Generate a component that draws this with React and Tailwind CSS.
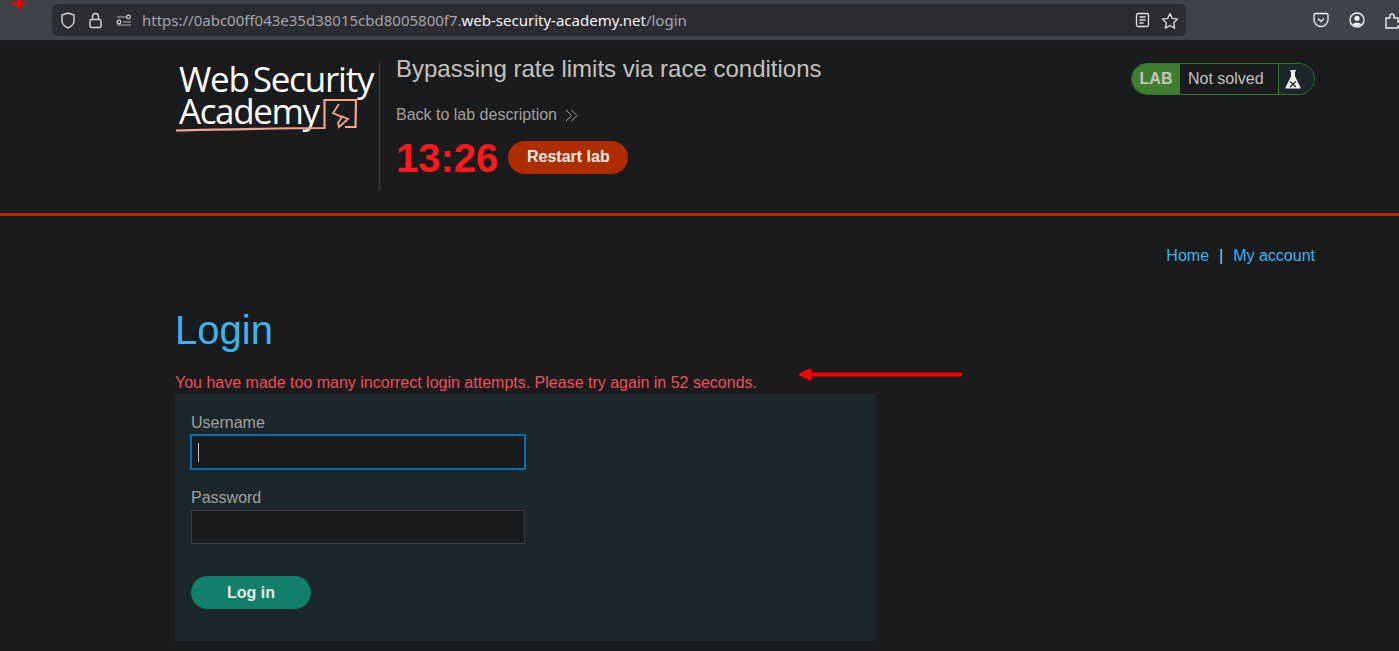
import React from "react";

const F = "font-['Liberation_Sans',Arial,sans-serif]";

function Toolbar() {
  return (
    <div className="relative h-[41px] flex items-center bg-[#3f4249] border-b border-[#1c1d20] font-['Inter',sans-serif]">
      <div className="absolute left-[12px] top-0 w-[14px] h-[9px]">
        <svg width="14" height="9" viewBox="0 0 14 9"><path d="M5 0h4v2h5v2.500H9V9H5V4.500H0V2h5z" fill="#f50000" /></svg>
      </div>
      <div className="ml-[52px] w-[1134px] shrink-0 h-8 rounded-[5px] bg-[#2b2c31] flex items-center pl-[8px] pr-[7px]">
        <svg width="16" height="17" viewBox="0 0 16 17" fill="none" stroke="#d6d6d9" strokeWidth="1.4"><path d="M8 1 2 3v6c0 3 3 5.500 6 7 3-1.500 6-4 6-7V3z" /></svg>
        <svg className="ml-[12px]" width="15" height="17" viewBox="0 0 15 17" fill="none" stroke="#d6d6d9" strokeWidth="1.4"><rect x="2" y="7.500" width="11" height="8" rx="1.500" /><path d="M4.500 7.500V4.500a3 3 0 0 1 6 0v3" /></svg>
        <svg className="ml-[13px]" width="16" height="12" viewBox="0 0 16 12" fill="none" stroke="#d6d6d9" strokeWidth="1.200"><circle cx="3" cy="8" r="1.800" /><circle cx="12.500" cy="3" r="1.800" /><path d="M1 3h9M7 8h8M1 11h14" strokeWidth="0.800" /></svg>
        <div className="ml-[10px] text-[15px] text-[#a4a5a9] font-['Noto_Sans',sans-serif] whitespace-nowrap">
          https://0abc00ff043e35d38015cbd8005800f7.<span className="text-[#f4f4f5]">web-security-academy.net</span>/login
        </div>
        <div className="ml-auto flex items-center gap-[11px]">
          <svg width="15" height="16" viewBox="0 0 15 16" fill="none" stroke="#e0e0e3" strokeWidth="1.300"><rect x="1.500" y="1.500" width="12" height="13" rx="1.500" /><path d="M4.500 5h6M4.500 8h6M4.500 11h4" /></svg>
          <svg width="18" height="17" viewBox="0 0 18 17" fill="none" stroke="#e0e0e3" strokeWidth="1.300" strokeLinejoin="round"><path d="m9 1.500 2.300 4.900 5.200.7-3.800 3.700.9 5.300L9 13.500l-4.600 2.600.9-5.300L1.500 7.100l5.200-.7z" /></svg>
        </div>
      </div>
      <div className="ml-[127px] flex items-center shrink-0">
        <svg width="16" height="16" viewBox="0 0 16 16" fill="none" stroke="#f0f0f2" strokeWidth="1.300"><path d="M2.500 1.500h11a1.500 1.500 0 0 1 1.500 1.500v4.500a7 7 0 0 1-14 0V3a1.500 1.500 0 0 1 1.500-1.500z" /><path d="m5 6.500 3 3 3-3" /></svg>
        <svg className="ml-[20px]" width="16" height="16" viewBox="0 0 16 16"><circle cx="8" cy="8" r="7" fill="none" stroke="#f0f0f2" strokeWidth="1.400" /><circle cx="8" cy="6.300" r="2.600" fill="#f0f0f2" /><path d="M3.500 12.500c1-2.500 8-2.500 9 0-2 2-7 2-9 0z" fill="#f0f0f2" /></svg>
        <svg className="ml-[20px]" width="16" height="17" viewBox="0 0 16 17" fill="none" stroke="#f0f0f2" strokeWidth="1.400"><path d="M1 6h4V4a2 2 0 0 1 4 0v2h4v4h2v4h-2v2H1z" /></svg>
      </div>
    </div>
  );
}

function Flask() {
  return (
    <svg width="16" height="20" viewBox="0 0 16 20">
      <path d="M5 1h6v1.200h-1v5L15.500 18.500c.3.700 0 1-.6 1H1.100c-.6 0-.9-.3-.6-1L6 7.200v-5H5z" fill="#f2f2f2" />
      <path d="M5 12.500 11 18M11 12.500 5 18" stroke="#1c2529" strokeWidth="1.300" />
    </svg>
  );
}

function Logo() {
  return (
    <div className="relative w-[204px] h-[76px] mt-[-1px] font-['Open_Sans',sans-serif] font-medium text-white">
      <div className="absolute left-[3px] top-[1px] text-[35px] leading-[32px] tracking-[-1.2px] [word-spacing:-4px] whitespace-nowrap">Web Security</div>
      <div className="absolute left-[3px] top-[33px] text-[35px] leading-[32px] tracking-[-1.4px] whitespace-nowrap">Academy</div>
      <svg className="absolute left-0 top-0" width="204" height="76" viewBox="0 0 204 76" fill="none" stroke="#f5a48e" strokeWidth="2.200">
        <path d="M0 68.500C50 67.500 100 66 148.500 66L148.500 38H180L179.500 65H169" />
        <path d="M163 42 157 51 166 55 162 61 163 65 172 57 165 54" strokeWidth="1.800" />
      </svg>
    </div>
  );
}

function Header() {
  return (
    <div className="h-[175px] border-b-[3px] border-[#ae2d00] pl-[176px] pr-[84px] flex pt-[22px]">
      <Logo />
      <div className="h-[127px] ml-[-1px] border-l border-[#3e4043] pl-[16px] flex-1 flex">
        <div className="flex-1">
          <h2 className="text-[24px] leading-[28px] text-[#c4c2bd] mt-[-8px]">Bypassing rate limits via race conditions</h2>
          <div className="mt-[22px] flex items-center text-[16px] leading-[20px] text-[#a3a19c]">
            Back to lab description
            <svg className="ml-[8px]" width="13" height="13" viewBox="0 0 13 13" fill="none" stroke="#a3a19c" strokeWidth="1"><path d="m1 1 5.500 5.500L1 12M6.500 1 12 6.500 6.500 12" /></svg>
          </div>
          <div className="mt-[10px] flex items-center">
            <span className="text-[40px] leading-[46px] font-bold text-[#fb191d]">13:26</span>
            <span className="ml-[10px] mb-[2px] w-[120px] h-[33px] rounded-full bg-[#ae2d00] text-[#f0eeea] font-bold text-[16px] flex items-center justify-center">Restart lab</span>
          </div>
        </div>
        <div className="h-[32px] w-[184px] rounded-full border border-[#2c7a22] flex overflow-hidden text-[16px]">
          <div className="w-[48px] bg-[#3f7e2e] text-[#c5c4be] font-bold flex items-center justify-center">LAB</div>
          <div className="w-[99px] bg-[#1a1b1d] text-[#c4c2bd] flex items-center pl-[8px] border-r border-[#2c7a22]">Not solved</div>
          <div className="flex-1 bg-[#1c272c] flex items-center pl-[6px]"><Flask /></div>
        </div>
      </div>
    </div>
  );
}

function Field({ label, focused }) {
  return (
    <div>
      <div className="text-[16px] leading-[18px] text-[#a3a19c]">{label}</div>
      <div className={focused
        ? "mt-[2px] ml-[-1px] w-[336px] h-[36px] bg-[#1a1b1d] border-2 border-[#0071bc] flex items-center pl-[6px]"
        : "mt-[3px] w-[334px] h-[34px] bg-[#1a1b1d] border border-[#3a3d40]"}>
        {focused && <span className="w-px h-[19px] bg-[#c4c2bd]" />}
      </div>
    </div>
  );
}

export default function App() {
  return (
    <div className={`relative w-[1399px] h-[651px] overflow-hidden bg-[#1a1b1d] ${F}`}>
      <Toolbar />
      <Header />
      <div className="mt-[30px] pr-[84px] flex justify-end text-[16px] leading-[20px] text-[#c4c2bd]">
        <span className="text-[#3fb2ee]">Home</span>
        <span className="mx-[10px]">|</span>
        <span className="text-[#3fb2ee]">My account</span>
      </div>
      <div className="pl-[175px]">
        <h1 className="mt-[41px] text-[40px] leading-[46px] text-[#3fb2ee]">Login</h1>
        <p className="mt-[20px] text-[16px] leading-[20px] text-[#f14e55]">You have made too many incorrect login attempts. Please try again in 52 seconds.</p>
        <div className="mt-[1px] w-[700px] h-[247px] bg-[#1c272c] pl-[16px] pt-[20px]">
          <Field label="Username" focused />
          <div className="mt-[19px]"><Field label="Password" /></div>
          <div className="mt-[32px] w-[120px] h-[33px] rounded-full bg-[#11806a] text-[#e8e8e4] font-bold text-[16px] flex items-center justify-center">Log in</div>
        </div>
      </div>
      <svg className="absolute left-[797px] top-[366px]" width="166" height="16" viewBox="0 0 166 16" fill="none" stroke="#fb0000" strokeLinecap="round" strokeLinejoin="round">
        <path d="M163 8.500H6" strokeWidth="4" />
        <path d="M13 3.500 3 8.500l10 5z" fill="#fb0000" strokeWidth="2" />
      </svg>
    </div>
  );
}
